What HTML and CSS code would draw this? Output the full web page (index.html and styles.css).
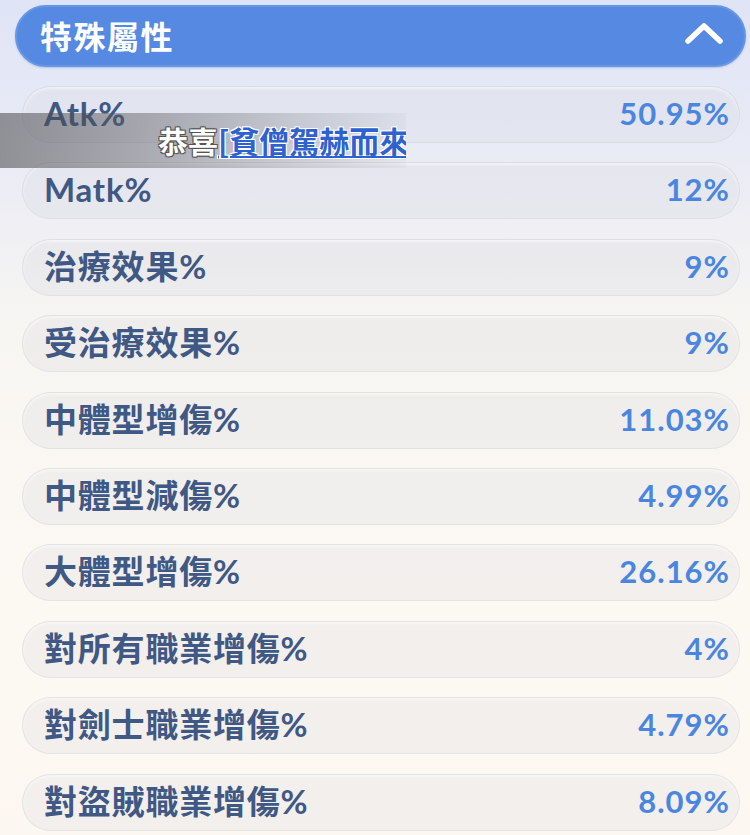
FILE: index.html
```html
<!DOCTYPE html>
<html lang="zh-Hant">
<head>
<meta charset="utf-8">
<title>特殊屬性</title>
<link rel="stylesheet" href="styles.css">
</head>
<body>
<div class="page">
  <div class="panel-head">
    <span class="panel-title">特殊屬性</span>
    <svg class="chevron" width="40" height="24" viewBox="0 0 40 24"><path d="M4 19 L20 4 L36 19" fill="none" stroke="#ffffff" stroke-width="5.5" stroke-linecap="round" stroke-linejoin="round"/></svg>
  </div>
  <ul class="stats">
    <li class="stat"><span class="label">Atk%</span><span class="value">50.95%</span></li>
    <li class="stat"><span class="label">Matk%</span><span class="value">12%</span></li>
    <li class="stat"><span class="label">治療效果%</span><span class="value">9%</span></li>
    <li class="stat"><span class="label">受治療效果%</span><span class="value">9%</span></li>
    <li class="stat"><span class="label">中體型增傷%</span><span class="value">11.03%</span></li>
    <li class="stat"><span class="label">中體型減傷%</span><span class="value">4.99%</span></li>
    <li class="stat"><span class="label">大體型增傷%</span><span class="value">26.16%</span></li>
    <li class="stat"><span class="label">對所有職業增傷%</span><span class="value">4%</span></li>
    <li class="stat"><span class="label">對劍士職業增傷%</span><span class="value">4.79%</span></li>
    <li class="stat"><span class="label">對盜賊職業增傷%</span><span class="value">8.09%</span></li>
  </ul>
  <div class="marquee">
    <div class="marquee-text"><span class="congrats">恭喜</span><span class="player">[貧僧駕赫而來]</span></div>
  </div>
</div>
</body>
</html>
```
FILE: styles.css
```css
html, body {
  margin: 0;
  padding: 0;
}
body {
  width: 750px;
  height: 835px;
  overflow: hidden;
  background: linear-gradient(180deg, #dfe4f6 0%, #e9ebf5 18%, #f8f6f2 40%, #fcf9f3 70%, #fcf8f1 100%);
  font-family: "Lato", "Noto Sans CJK TC", sans-serif;
}
.page {
  position: relative;
  width: 750px;
  height: 835px;
  padding-top: 5px;
  box-sizing: border-box;
}
.panel-head {
  margin-left: 15px;
  width: 731px;
  height: 62px;
  box-sizing: border-box;
  border-radius: 31px;
  background: #5689e1;
  border: 2px solid #6697e6;
  box-shadow: 0 1px 2px rgba(60, 90, 160, 0.25);
  display: flex;
  align-items: center;
  justify-content: space-between;
  padding: 0 20px 0 23px;
}
.panel-title {
  color: #ffffff;
  font-family: "Noto Sans CJK TC", sans-serif;
  font-size: 32px;
  font-weight: 700;
  letter-spacing: 1.5px;
  line-height: 1;
  margin-top: -2px;
}
.chevron {
  display: block;
  margin-top: -4px;
}
.stats {
  list-style: none;
  margin: 19px 0 0 22px;
  padding: 0;
  width: 718px;
  display: flex;
  flex-direction: column;
  gap: 19.4px;
}
.stat {
  height: 57px;
  box-sizing: border-box;
  border-radius: 29px;
  background: rgba(215, 216, 224, 0.28);
  border: 1.5px solid rgba(200, 202, 215, 0.35);
  box-shadow: inset 0 2px 3px rgba(255, 255, 255, 0.5);
  display: flex;
  align-items: center;
  justify-content: space-between;
  padding: 0 9px 0 21px;
}
.label {
  color: #3f5884;
  font-family: "Lato", "Noto Sans CJK TC", sans-serif;
  font-size: 33px;
  font-weight: 700;
  letter-spacing: 0.8px;
  line-height: 1;
}
.label, .value {
  margin-top: -2px;
}
.value {
  color: #4a86e0;
  font-family: "Lato", sans-serif;
  font-size: 31px;
  font-weight: 700;
  line-height: 1;
  letter-spacing: 1px;
}
.marquee {
  position: absolute;
  left: 0;
  top: 113px;
  width: 406px;
  height: 55px;
  overflow: hidden;
  background: linear-gradient(90deg, rgba(70, 70, 72, 0.55) 0%, rgba(90, 90, 95, 0.45) 35%, rgba(120, 122, 130, 0.25) 75%, rgba(150, 155, 170, 0.08) 100%);
}
.marquee-text {
  position: absolute;
  left: 158px;
  top: 12px;
  white-space: nowrap;
  font-family: "Noto Sans CJK TC", sans-serif;
  font-size: 30px;
  font-weight: 700;
  line-height: 1;
}
.congrats {
  color: #ffffff;
  text-shadow: -1px -1px 0 #555, 1px -1px 0 #555, -1px 1px 0 #555, 1px 1px 0 #555, 0 0 2px #444;
}
.player {
  color: #2f62cf;
  text-decoration: underline;
  text-decoration-color: #2f62cf;
  text-decoration-thickness: 2px;
  text-underline-offset: 3px;
  text-shadow: -1px -1px 0 #fff, 1px -1px 0 #fff, -1px 1px 0 #fff, 1px 1px 0 #fff;
}
```
